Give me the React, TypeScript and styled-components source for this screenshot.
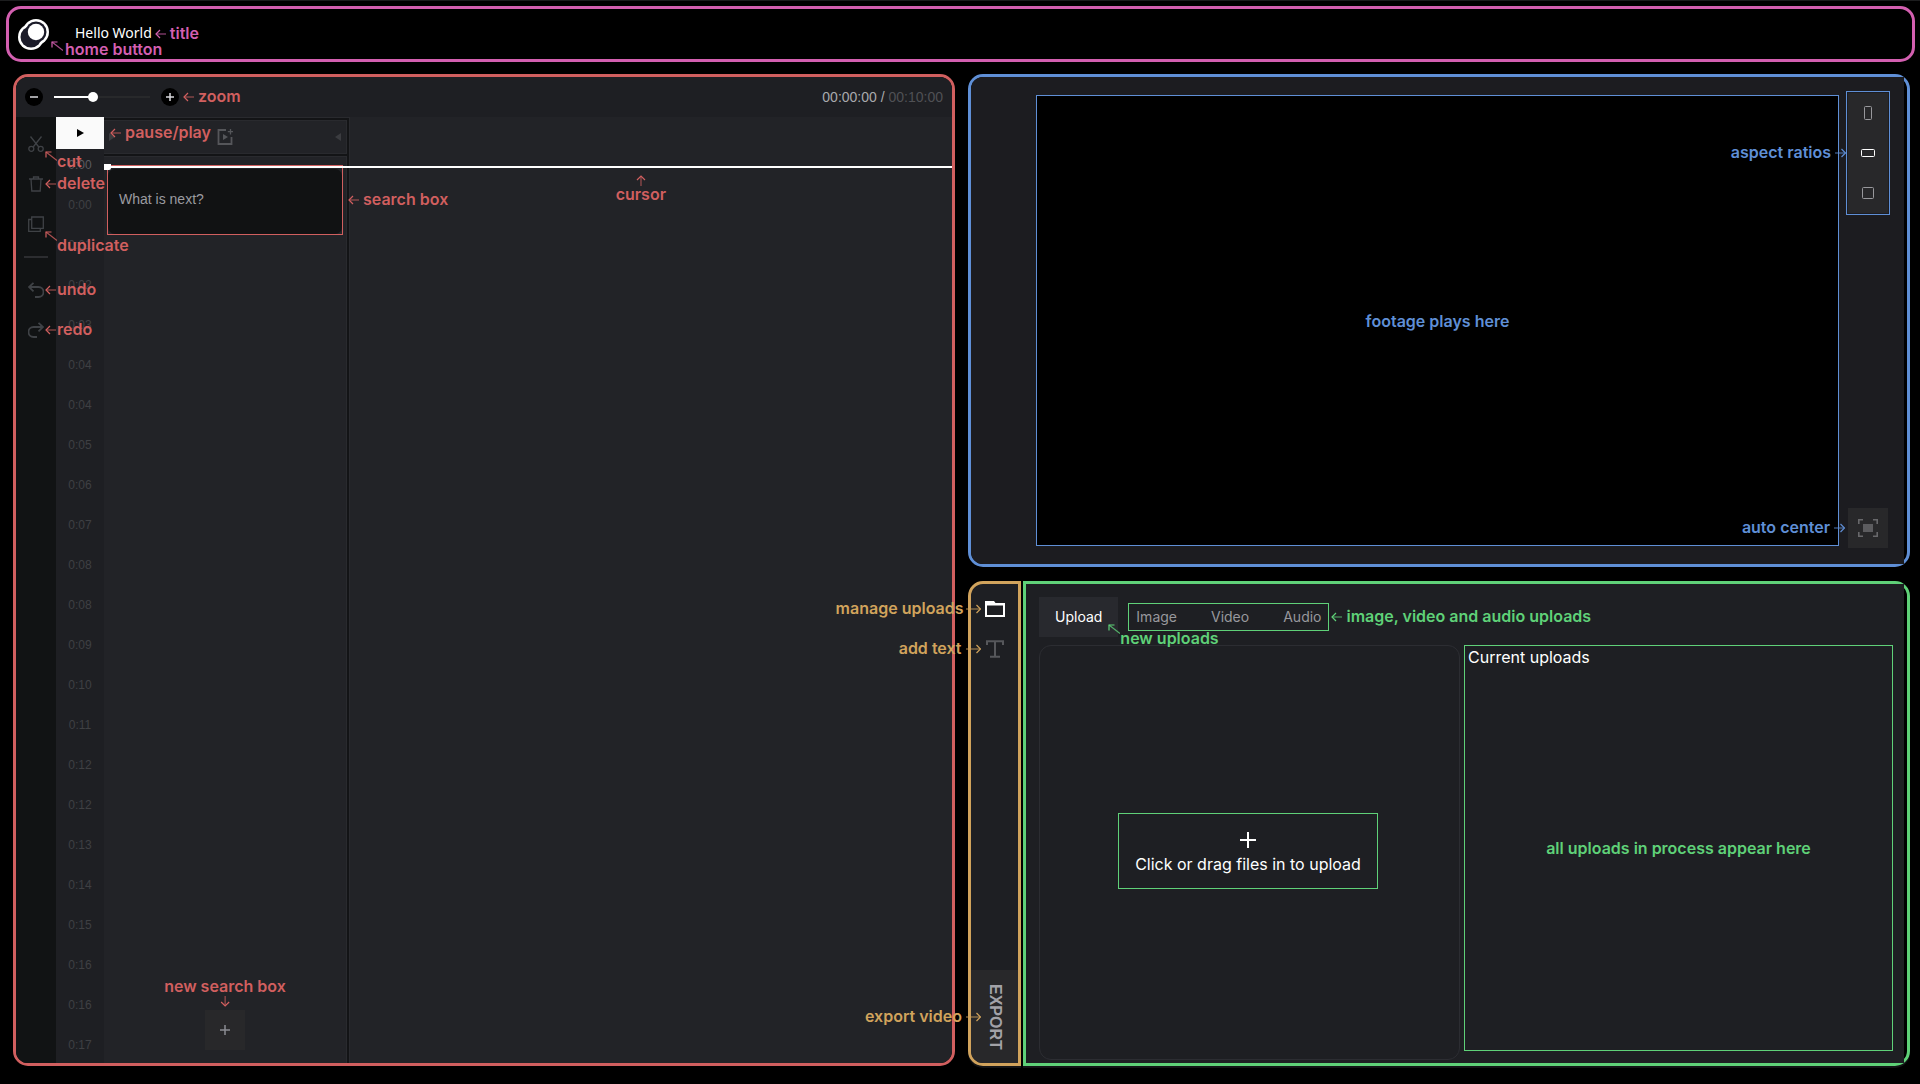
import React, { useState } from 'react';
import styled, { createGlobalStyle, css } from 'styled-components';

const tint = {
  pink: '#d35fb0',
  red: '#d15f5f',
  blue: '#5f8fd6',
  orange: '#d1a35c',
  green: '#5fd178',
};

const fonts = {
  ui: '"Liberation Sans", Arial, sans-serif',
  note: 'Inter, "Liberation Sans", sans-serif',
  title: '"Noto Sans", sans-serif',
};

const GlobalStyle = createGlobalStyle`
  *, *::before, *::after { box-sizing: border-box; }
  body { margin: 0; background: #000; font-family: ${fonts.ui}; color: #fff; }
  button { border: 0; padding: 0; background: none; color: inherit; font: inherit; cursor: pointer; }
  svg { display: block; flex: none; }
`;

/* ---------- page frame ---------- */

const Page = styled.div`
  min-height: 100vh;
  display: flex;
  flex-direction: column;
  padding: 5px 5px 18px 6px;
  border-top: 1px solid #1c1d1e;
`;

const Header = styled.header`
  display: flex;
  align-items: center;
  gap: 26px;
  height: 56px;
  padding: 0 9px;
  border: 3px solid ${tint.pink};
  border-radius: 15px;
`;

const Title = styled.h1`
  margin: 0;
  padding-bottom: 2px;
  font: 400 14px/20px ${fonts.title};
`;

const Workspace = styled.main`
  flex: 1;
  display: grid;
  grid-template-columns: minmax(0, 1fr) minmax(0, 1fr);
  gap: 13px;
  padding: 12px 5px 0 7px;
`;

const Panel = styled.section<{ $tint: string; $radius?: string }>`
  display: flex;
  flex-direction: column;
  border: 3px solid ${(p) => p.$tint};
  border-radius: ${(p) => p.$radius ?? '15px'};
`;

/* ---------- notes ---------- */

type Place = 'right' | 'left' | 'corner' | 'above' | 'below';

const Anchor = styled.div`
  position: relative;
  display: flex;
`;

const placement = {
  right: css<{ $gap: number }>`
    left: 100%; top: 0; bottom: 0; margin-left: ${(p) => p.$gap}px; align-items: center;
    span { padding-bottom: 2px; }
  `,
  left: css<{ $gap: number }>`
    right: 100%; top: 0; bottom: 0; margin-right: ${(p) => p.$gap}px; align-items: center;
    span { padding-bottom: 2px; }
  `,
  corner: css<{ $gap: number; $drop: number }>`
    left: 100%; top: calc(50% + 7px); margin-left: ${(p) => p.$gap}px; align-items: flex-start;
    span { margin-top: ${(p) => p.$drop - 16}px; }
  `,
  above: css<{ $gap: number }>`
    left: 50%; bottom: 100%; margin-bottom: ${(p) => p.$gap}px;
    transform: translateX(-50%); flex-direction: column; align-items: center;
  `,
  below: css<{ $gap: number }>`
    right: 286px; top: 100%; margin-top: ${(p) => p.$gap}px;
    flex-direction: column; align-items: center;
  `,
};

const NoteText = styled.span<{ $tint: string }>`
  font: 600 16px/16px ${fonts.note};
  color: ${(p) => p.$tint};
  white-space: nowrap;
`;

const NoteBox = styled.div<{ $place: Place; $gap: number; $drop: number; $space: number; $tint: string }>`
  position: absolute;
  z-index: 5;
  display: flex;
  gap: ${(p) => p.$space}px;
  color: ${(p) => p.$tint};
  pointer-events: none;
  ${(p) => placement[p.$place]}
`;

function Arrow({ place, length = 11 }: { place: Place; length?: number }) {
  const common = { fill: 'none', stroke: 'currentColor', strokeWidth: 1.2 };
  const e = length - 0.5;
  switch (place) {
    case 'right':
      return <svg width={length} height="10" {...common}><path d={`M1 5H${length}`} opacity=".7" /><path d="M5 1L1 5l4 4" /></svg>;
    case 'left':
      return <svg width={length} height="10" {...common}><path d={`M0 5H${e}`} opacity=".7" /><path d={`M${e - 4} 1l4 4-4 4`} /></svg>;
    case 'corner':
      return <svg width="12" height="10" {...common}><path d="M1 1l11 8.5" opacity=".8" /><path d="M1 6.500V1h5.500" /></svg>;
    case 'above':
      return <svg width="10" height="11" {...common}><path d="M5 0v10" opacity=".7" /><path d="M1 6l4 4 4-4" /></svg>;
    default:
      return <svg width="10" height="11" {...common}><path d="M5 1v10" opacity=".7" /><path d="M1 5l4-4 4 4" /></svg>;
  }
}

interface NoteProps {
  text: string;
  color: string;
  place?: Place;
  gap?: number;
  drop?: number;
  space?: number;
  length?: number;
}

function Note({ text, color, place = 'right', gap = 0, drop = 18, space = 4, length }: NoteProps) {
  const arrow = <Arrow place={place} length={length} />;
  const label = <NoteText $tint={color}>{text}</NoteText>;
  const textFirst = place === 'left' || place === 'above';
  return (
    <NoteBox $place={place} $gap={gap} $drop={drop} $space={space} $tint={color}>
      {textFirst ? <>{label}{arrow}</> : <>{arrow}{label}</>}
    </NoteBox>
  );
}

/* ---------- editor ---------- */

const Toolbar = styled.div`
  display: flex;
  align-items: center;
  gap: 11px;
  height: 40px;
  padding: 0 9px;
  background: #1e1f23;
  border-radius: 12px 12px 0 0;
`;

const RoundButton = styled.button`
  display: grid;
  place-items: center;
  width: 18px;
  height: 18px;
  border-radius: 50%;
  background: #000;
  color: #d8d8dc;
`;

const ZoomSlider = styled.input<{ $value: number }>`
  appearance: none;
  width: 96px;
  height: 10px;
  margin: 0;
  background: linear-gradient(to right, #fff ${(p) => p.$value}%, #28292b 0) center / 100% 2px no-repeat;
  &::-webkit-slider-thumb {
    appearance: none;
    width: 10px;
    height: 10px;
    border-radius: 50%;
    background: #fff;
  }
`;

const Clock = styled.div`
  margin-left: auto;
  font-size: 14px;
  line-height: 20px;
  color: #a9aaad;
  span { color: #505155; }
`;

const EditorBody = styled.div`
  position: relative;
  flex: 1;
  display: flex;
  background: #222327;
  border-radius: 0 0 12px 12px;
`;

const ToolRail = styled.div`
  display: flex;
  flex-direction: column;
  align-items: center;
  width: 40px;
  padding-top: 7px;
  background: #111314;
  border-radius: 0 0 0 12px;
`;

const ToolButton = styled.button`
  display: grid;
  place-items: center;
  width: 18px;
  height: 40px;
  color: #3f4246;
`;

const RailLine = styled.hr`
  width: 24px;
  height: 2px;
  margin: 12px 0;
  border: 0;
  background: #2c2d30;
`;

const Ruler = styled.div`
  width: 48px;
  background: #1e1f23;
`;

const PlayButton = styled.button`
  display: grid;
  place-items: center;
  width: 48px;
  height: 32px;
  background: #fafafa;
  color: #000;
`;

const Ticks = styled.ol`
  display: flex;
  flex-direction: column;
  gap: 8px;
  margin: 0;
  padding: 0;
  list-style: none;
  text-align: center;
  font-size: 12px;
  line-height: 32px;
  color: #3f4043;
  li:first-child { color: #5a5b60; }
`;

const Track = styled.div`
  display: flex;
  flex-direction: column;
  gap: 2px;
  width: 246px;
  padding: 2px 2px 0 0;
  background: #131416;
  border: solid #292a2e;
  border-width: 1px 1px 0 0;
`;

const TrackHead = styled.div`
  display: flex;
  align-items: center;
  justify-content: space-between;
  height: 34px;
  padding: 0 5px;
  color: #3b3c40;
  background: #222327;
  border: solid #292a2e;
  border-width: 1px 1px 1px 0;
`;

const TrackBody = styled.div`
  flex: 1;
  display: flex;
  flex-direction: column;
  align-items: center;
  justify-content: space-between;
  padding: 8px 3px 13px;
  background: #222327;
  border: solid #292a2e;
  border-width: 1px 1px 0 0;
`;

const SearchFrame = styled(Anchor)`
  align-self: stretch;
  height: 70px;
  padding-top: 3px;
  border: 1px solid ${tint.red};
`;

const SearchInput = styled.textarea`
  width: 100%;
  padding: 20px 11px;
  border: 0;
  border-radius: 7px;
  background: #111213;
  color: #9b9ba0;
  font: 14px/20px ${fonts.ui};
  resize: none;
  outline: none;
  &::placeholder { color: #9b9ba0; }
`;

const SquareButton = styled.button`
  display: grid;
  place-items: center;
  width: 40px;
  height: 40px;
  background: #28282a;
  color: #8b8c92;
`;

const Cursor = styled.div`
  position: absolute;
  top: 49px;
  left: 88px;
  right: 0;
  height: 2px;
  background: #fff;
  &::before {
    content: '';
    position: absolute;
    top: -2px;
    left: 0;
    width: 7px;
    height: 6px;
    background: #fff;
    border-radius: 0 0 2px 0;
  }
`;

/* ---------- preview ---------- */

const RightColumn = styled.div`
  display: grid;
  grid-template-rows: auto minmax(0, 1fr);
  gap: 14px;
`;

const Preview = styled.div`
  display: grid;
  grid-template-columns: 1fr 86% 1fr;
  margin-right: 3px;
  background: #1c1c20;
  border-radius: 12px 0 0 12px;
`;

const Screen = styled.div`
  grid-column: 2;
  display: grid;
  place-items: center;
  aspect-ratio: 16 / 9;
  margin: 18px 0;
  border: 1px solid ${tint.blue};
  background: #000;
`;

const PreviewTools = styled.div`
  display: flex;
  flex-direction: column;
  align-items: flex-end;
  justify-content: space-between;
  padding: 14px 14px 16px 0;
`;

const RatioGroup = styled(Anchor)`
  flex-direction: column;
  padding: 1px;
  border: 1px solid ${tint.blue};
`;

const RatioButton = styled(SquareButton)<{ $on?: boolean }>`
  color: ${(p) => (p.$on ? '#fff' : '#98989c')};
`;

const CenterAnchor = styled(Anchor)`
  margin-right: 2px;
`;

/* ---------- uploads ---------- */

const Library = styled.div`
  display: grid;
  grid-template-columns: 53px minmax(0, 1fr);
  gap: 2px;
`;

const LibraryNav = styled(Panel)`
  justify-content: space-between;
  background: #1e1f23;
  box-shadow: 0 2px 0 #131416;
`;

const NavTop = styled.div`
  display: flex;
  flex-direction: column;
  align-items: center;
  padding-top: 5px;
`;

const NavButton = styled.button<{ $on?: boolean }>`
  display: grid;
  place-items: center;
  width: 24px;
  height: 40px;
  color: ${(p) => (p.$on ? '#fff' : '#56575b')};
`;

const ExportButton = styled.button`
  flex: 1;
  display: grid;
  place-items: center;
  height: 93px;
  background: #28282a;
  border-radius: 0 0 0 12px;
  color: #a2a2a8;
  font: 700 16px/20px ${fonts.ui};
  span { writing-mode: vertical-rl; }
`;

const UploadPanel = styled(Panel)`
  padding-right: 3px;
  box-shadow: 0 2px 0 #131416;
`;

const UploadBody = styled.div`
  flex: 1;
  display: flex;
  flex-direction: column;
  gap: 8px;
  padding: 13px 11px 3px 13px;
  background: #1e1f23;
`;

const TabRow = styled.div`
  display: flex;
  align-items: center;
  gap: 10px;
`;

const UploadTab = styled.button`
  height: 40px;
  padding: 0 16px;
  background: #28292e;
  font: 14px/20px ${fonts.note};
`;

const TabGroup = styled(Anchor)`
  gap: 34px;
  height: 28px;
  padding: 0 7px;
  border: 1px solid ${tint.green};
`;

const Tab = styled.button`
  color: #98989d;
  font: 14px/20px ${fonts.note};
`;

const UploadColumns = styled.div`
  flex: 1;
  display: grid;
  grid-template-columns: 421fr 429fr;
  gap: 4px;
`;

const DropArea = styled.div`
  display: grid;
  place-items: center;
  padding: 0 3px 4px 0;
  border: 1px solid #2c2d32;
  border-radius: 12px;
`;

const DropLabel = styled.label`
  display: flex;
  flex-direction: column;
  align-items: center;
  gap: 6px;
  padding: 18px 16px 14px;
  border: 1px solid ${tint.green};
  font: 16px/20px ${fonts.note};
  cursor: pointer;
  input { position: absolute; width: 1px; height: 1px; opacity: 0; }
`;

const Current = styled.section`
  display: flex;
  flex-direction: column;
  margin-bottom: 9px;
  padding: 1px 3px;
  border: 1px solid ${tint.green};
`;

const CurrentTitle = styled.h2`
  margin: 0;
  font: 400 16px/20px ${fonts.note};
`;

const CurrentList = styled.div`
  flex: 1;
  display: grid;
  place-items: center;
  padding-bottom: 20px;
`;

/* ---------- icons ---------- */

const Icon = ({ size = 16, w = 1.3, children }: { size?: number; w?: number; children: React.ReactNode }) => (
  <svg width={size} height={size} viewBox={`0 0 ${size} ${size}`} fill="none" stroke="currentColor" strokeWidth={w} aria-hidden="true">
    {children}
  </svg>
);

const Logo = () => (
  <svg width="31" height="31" viewBox="0 0 31 31" aria-hidden="true">
    <circle cx="13" cy="18" r="13" fill="#fff" />
    <circle cx="18" cy="13" r="13" fill="#fff" />
    <circle cx="13" cy="18" r="10.500" fill="#1b1b29" />
    <circle cx="18" cy="13" r="10.500" fill="#1b1b29" />
    <circle cx="18" cy="13" r="8.200" fill="#fff" />
  </svg>
);

const CutIcon = () => (
  <Icon>
    <path d="M2.500 .5l8.300 10.500M13.500 .5L5.200 11" />
    <circle cx="3.300" cy="12.800" r="2.500" />
    <circle cx="12.700" cy="12.800" r="2.500" />
  </Icon>
);
const TrashIcon = () => (
  <Icon><path d="M1 3h14M5.500 3V1h5v2M3 3l.8 12h8.400L13 3" /></Icon>
);
const CopyIcon = () => (
  <Icon><path d="M3.700 1h11.600v11.300H3.700zM3.700 3.500H.7v11.800h11.600v-3" /></Icon>
);
const UndoIcon = () => (
  <Icon w={1.8}><path d="M5.500 .8L1 5l4.500 4.300M1 5h9.500a4.700 4.700 0 0 1 0 10H7" /></Icon>
);
const RedoIcon = () => (
  <Icon w={1.8}><path d="M10.500 .8L15 5l-4.500 4.300M15 5H5.500a4.700 4.700 0 0 0 0 10H9" /></Icon>
);
const MediaIcon = () => (
  <Icon w={1.8}>
    <path d="M9 1H1.500v14h13V8" stroke="#55565a" />
    <path d="M6 5l5 3-5 3z" fill="#55565a" stroke="none" />
    <path d="M13.500 0v5.500M10.800 2.700h5.200" strokeWidth="1.300" stroke="#55565a" />
  </Icon>
);
const PlayIcon = () => (
  <svg width="7" height="8" viewBox="0 0 7 8" fill="currentColor" aria-hidden="true">
    <path d="M0 0v8l7-4z" />
  </svg>
);
const Triangle = ({ flip }: { flip?: boolean }) => (
  <svg width="6" height="8" viewBox="0 0 6 8" fill="currentColor" aria-hidden="true">
    <path d={flip ? 'M6 0v8L0 4z' : 'M0 0v8l6-4z'} />
  </svg>
);
const FolderIcon = () => (
  <svg width="20" height="16" viewBox="0 0 20 16" aria-hidden="true">
    <path d="M0 0h9l1.500 2H20v14H0z" fill="#fff" />
    <path d="M2 4.500h16V14H2z" fill="#1e1f23" />
  </svg>
);
const TextIcon = () => (
  <Icon size={18} w={2}><path d="M1 5V1.300h16V5M9 1.300v15.500M4 16.800h10" /></Icon>
);
const Plus = ({ size, w }: { size: number; w: number }) => (
  <Icon size={size} w={w}><path d={`M${size / 2} 0v${size}M0 ${size / 2}h${size}`} /></Icon>
);
const Frame = ({ w, h }: { w: number; h: number }) => (
  <svg width={w} height={h} fill="none" stroke="currentColor" aria-hidden="true">
    <rect x=".5" y=".5" width={w - 1} height={h - 1} rx="1" />
  </svg>
);
const FitIcon = () => (
  <svg width="20" height="18" viewBox="0 0 20 18" fill="none" stroke="#68686b" strokeWidth="1.600" aria-hidden="true">
    <path d="M.8 5V.8H5M15 .8h4.200V5M.8 13v4.200H5M15 17.200h4.200V13" />
    <path d="M5 5h10v8H5z" fill="#5c5c5f" stroke="none" />
  </svg>
);

/* ---------- data ---------- */

const tickLabels = [
  '0:00', '0:00', '0:01', '0:02', '0:03', '0:04', '0:04', '0:05', '0:06', '0:07', '0:08', '0:08',
  '0:09', '0:10', '0:11', '0:12', '0:12', '0:13', '0:14', '0:15', '0:16', '0:16', '0:17',
];

const editTools = [
  { name: 'cut', icon: <CutIcon />, place: 'corner' as Place, drop: 18, space: 0 },
  { name: 'delete', icon: <TrashIcon />, place: 'right' as Place, drop: 18, space: 1 },
  { name: 'duplicate', icon: <CopyIcon />, place: 'corner' as Place, drop: 22, space: 0 },
];

const historyTools = [
  { name: 'undo', icon: <UndoIcon />, place: 'right' as Place, drop: 18, space: 1 },
  { name: 'redo', icon: <RedoIcon />, place: 'right' as Place, drop: 18, space: 1 },
];

const ratios = [
  { name: 'Portrait', w: 8, h: 14 },
  { name: 'Landscape', w: 14, h: 8 },
  { name: 'Square', w: 12, h: 12 },
];

function Tool({ name, icon, place, drop, space }: (typeof editTools)[number]) {
  return (
    <Anchor>
      <ToolButton aria-label={name}>{icon}</ToolButton>
      <Note text={name} color={tint.red} place={place} drop={drop} space={space} />
    </Anchor>
  );
}

function Editor() {
  const [zoom, setZoom] = useState(40);
  return (
    <Panel $tint={tint.red}>
      <Toolbar>
        <RoundButton aria-label="Zoom out"><Icon size={8} w={1.5}><path d="M0 4h8" /></Icon></RoundButton>
        <ZoomSlider
          type="range" aria-label="Zoom" min={0} max={100}
          value={zoom} $value={zoom}
          onChange={(e) => setZoom(Number(e.target.value))}
        />
        <Anchor>
          <RoundButton aria-label="Zoom in"><Plus size={8} w={1.5} /></RoundButton>
          <Note text="zoom" color={tint.red} gap={4} />
        </Anchor>
        <Clock>00:00:00 / <span>00:10:00</span></Clock>
      </Toolbar>
      <EditorBody>
        <ToolRail>
          {editTools.map((t) => <Tool key={t.name} {...t} />)}
          <RailLine />
          {historyTools.map((t) => <Tool key={t.name} {...t} />)}
        </ToolRail>
        <Ruler>
          <Anchor>
            <PlayButton aria-label="Play"><PlayIcon /></PlayButton>
            <Note text="pause/play" color={tint.red} gap={6} />
          </Anchor>
          <Ticks>{tickLabels.map((t, i) => <li key={i}>{t}</li>)}</Ticks>
        </Ruler>
        <Track>
          <TrackHead><Triangle /><MediaIcon /><Triangle flip /></TrackHead>
          <TrackBody>
            <SearchFrame>
              <SearchInput aria-label="Search" placeholder="What is next?" />
              <Note text="search box" color={tint.red} gap={6} />
            </SearchFrame>
            <Anchor>
              <SquareButton aria-label="New search box"><Plus size={10} w={1.5} /></SquareButton>
              <Note text="new search box" color={tint.red} place="above" gap={3} space={2} />
            </Anchor>
          </TrackBody>
        </Track>
        <Cursor><Note text="cursor" color={tint.red} place="below" gap={7} space={0} /></Cursor>
      </EditorBody>
    </Panel>
  );
}

export default function App() {
  return (
    <>
      <GlobalStyle />
      <Page>
        <Header>
          <Anchor>
            <button aria-label="Home"><Logo /></button>
            <Note text="home button" color={tint.pink} place="corner" gap={2} drop={16} space={2} />
          </Anchor>
          <Anchor>
            <Title>Hello World</Title>
            <Note text="title" color={tint.pink} gap={3} />
          </Anchor>
        </Header>
        <Workspace>
          <Editor />
          <RightColumn>
            <Panel $tint={tint.blue}>
              <Preview>
                <Screen><NoteText $tint={tint.blue}>footage plays here</NoteText></Screen>
                <PreviewTools>
                  <RatioGroup>
                    {ratios.map((r, i) => (
                      <RatioButton key={r.name} aria-label={r.name} $on={i === 1}><Frame w={r.w} h={r.h} /></RatioButton>
                    ))}
                    <Note text="aspect ratios" color={tint.blue} place="left" gap={1} />
                  </RatioGroup>
                  <CenterAnchor>
                    <SquareButton aria-label="Auto center"><FitIcon /></SquareButton>
                    <Note text="auto center" color={tint.blue} place="left" gap={3} />
                  </CenterAnchor>
                </PreviewTools>
              </Preview>
            </Panel>
            <Library>
              <LibraryNav $tint={tint.orange} $radius="15px 0 0 15px">
                <NavTop>
                  <Anchor>
                    <NavButton $on aria-label="Manage uploads"><FolderIcon /></NavButton>
                    <Note text="manage uploads" color={tint.orange} place="left" gap={2} space={2} length={15} />
                  </Anchor>
                  <Anchor>
                    <NavButton aria-label="Add text"><TextIcon /></NavButton>
                    <Note text="add text" color={tint.orange} place="left" gap={2} length={15} />
                  </Anchor>
                </NavTop>
                <Anchor>
                  <ExportButton><span>EXPORT</span></ExportButton>
                  <Note text="export video" color={tint.orange} place="left" gap={-10} length={15} />
                </Anchor>
              </LibraryNav>
              <UploadPanel $tint={tint.green} $radius="0 15px 15px 0">
                <UploadBody>
                  <TabRow>
                    <Anchor>
                      <UploadTab>Upload</UploadTab>
                      <Note text="new uploads" color={tint.green} place="corner" gap={-10} drop={22} space={0} />
                    </Anchor>
                    <TabGroup>
                      <Tab>Image</Tab>
                      <Tab>Video</Tab>
                      <Tab>Audio</Tab>
                      <Note text="image, video and audio uploads" color={tint.green} gap={3} />
                    </TabGroup>
                  </TabRow>
                  <UploadColumns>
                    <DropArea>
                      <DropLabel>
                        <Plus size={16} w={2} />
                        Click or drag files in to upload
                        <input type="file" multiple />
                      </DropLabel>
                    </DropArea>
                    <Current>
                      <CurrentTitle>Current uploads</CurrentTitle>
                      <CurrentList>
                        <NoteText $tint={tint.green}>all uploads in process appear here</NoteText>
                      </CurrentList>
                    </Current>
                  </UploadColumns>
                </UploadBody>
              </UploadPanel>
            </Library>
          </RightColumn>
        </Workspace>
      </Page>
    </>
  );
}
